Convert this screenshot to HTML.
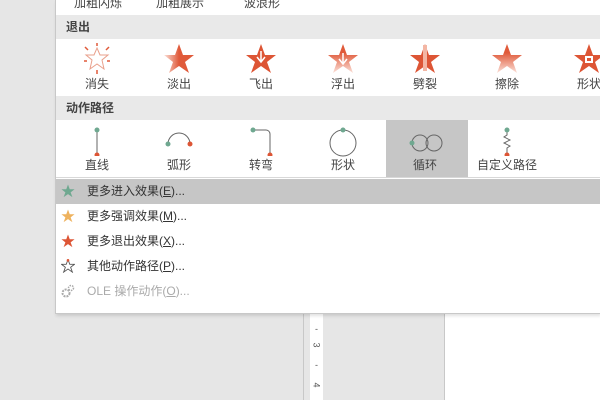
<!DOCTYPE html>
<html><head><meta charset="utf-8"><style>
*{margin:0;padding:0;box-sizing:border-box}
body{width:600px;height:400px;overflow:hidden;background:#e6e6e6;position:relative;font-family:"Liberation Sans","Noto Sans CJK SC",sans-serif;font-size:12px;color:#444}
.menu{position:absolute;left:55px;top:0;width:545px;height:314px;background:#fff;border-left:1px solid #c8c8c8;border-bottom:1px solid #c8c8c8;box-shadow:1px 2px 3px rgba(0,0,0,.12)}
.hdr{position:absolute;left:0;width:545px;height:24px;background:#e9e9e9;font-weight:bold;padding-left:10px;line-height:24px;color:#444}
.cell{position:absolute;width:82px;height:57px;text-align:center}
.cell svg{position:absolute;left:25px;top:4px}
.cell span{position:absolute;left:0;right:0;top:36px;font-size:12px;color:#444}
.item{position:absolute;left:0;width:545px;height:25px;line-height:25px;padding-left:31px;font-size:12px;color:#333}
.item svg{position:absolute;left:5px;top:5px}
u{text-decoration:underline}
</style></head><body>
<div style="position:absolute;left:303px;top:314px;width:1px;height:86px;background:#c8c8c8"></div>
<div style="position:absolute;left:310px;top:314px;width:13px;height:86px;background:#fff;font-size:9px;color:#555;text-align:center">
<div style="position:absolute;top:10px;left:0;right:0">-</div>
<div style="position:absolute;top:26px;left:0;right:0;transform:rotate(90deg)">3</div>
<div style="position:absolute;top:46px;left:0;right:0">-</div>
<div style="position:absolute;top:66px;left:0;right:0;transform:rotate(90deg)">4</div></div>
<div style="position:absolute;left:444px;top:314px;width:156px;height:86px;background:#fff;border-left:1px solid #c8c8c8"></div>
<div class="menu">
<div style="position:absolute;top:-6px;left:18px;font-size:12px;color:#444">加粗闪烁</div>
<div style="position:absolute;top:-6px;left:100px;font-size:12px;color:#444">加粗展示</div>
<div style="position:absolute;top:-6px;left:188px;font-size:12px;color:#444">波浪形</div>
<div class="hdr" style="top:15px">退出</div>
<svg width="0" height="0" style="position:absolute"><defs>
<symbol id="st" viewBox="0 0 32 32"><polygon points="16,1 20,12 31,12 22,19 26,30 16,23 6,30 10,19 1,12 12,12"/></symbol>
<linearGradient id="g1" x1="0" x2="1"><stop offset="0" stop-color="#fbe0d8"/><stop offset=".5" stop-color="#e05a3a"/></linearGradient>
<linearGradient id="g2" x1="0" y1="0" x2="0" y2="1"><stop offset=".3" stop-color="#e05a3a"/><stop offset="1" stop-color="#fbe0d8"/></linearGradient>
</defs></svg>
<div class="cell" style="left:0;top:39px"><svg width="32" height="32" viewBox="0 0 32 32"><polygon points="16,5 19,12 27,12 21,17 23,26 16,21 9,26 11,17 5,12 13,12" fill="#fff" stroke="#e9a08c" stroke-width="1"/><g stroke="#e05a3a" stroke-width="1.5"><path d="M16 0v3M4 4l3 3M28 4l-3 3M16 27v4M3 18h3M29 18h-3"/></g></svg><span>消失</span></div>
<div class="cell" style="left:82px;top:39px"><svg width="32" height="32"><use href="#st" fill="url(#g1)"/></svg><span>淡出</span></div>
<div class="cell" style="left:164px;top:39px"><svg width="32" height="32"><use href="#st" fill="#dd5535"/><path d="M14 0v4M18 0v4M11 2v3M21 2v3M16 8v10M12 14l4 5 4-5" stroke="#fff" stroke-width="1.5" fill="none"/></svg><span>飞出</span></div>
<div class="cell" style="left:246px;top:39px"><svg width="32" height="32"><use href="#st" fill="url(#g2)"/><path d="M16 10v10M12 16l4 5 4-5" stroke="#fff" stroke-width="1.5" fill="none"/></svg><span>浮出</span></div>
<div class="cell" style="left:328px;top:39px"><svg width="32" height="32"><use href="#st" fill="#dd5535"/><rect x="14" y="2" width="4" height="26" fill="#f3b6a4"/></svg><span>劈裂</span></div>
<div class="cell" style="left:410px;top:39px"><svg width="32" height="32"><use href="#st" fill="url(#g2)"/></svg><span>擦除</span></div>
<div class="cell" style="left:492px;top:39px"><svg width="32" height="32"><use href="#st" fill="#dd5535"/><rect x="12" y="13" width="8" height="7" fill="#fff"/><rect x="14" y="15" width="4" height="3" fill="#dd5535"/></svg><span>形状</span></div>
<div class="hdr" style="top:96px">动作路径</div>
<div class="cell" style="left:330px;top:120px;background:#c6c6c6;width:82px"></div>
<div class="cell" style="left:0;top:120px"><svg width="32" height="32"><path d="M16 6v26" stroke="#666"/><circle cx="16" cy="6" r="2.5" fill="#6fa890"/><circle cx="16" cy="31" r="2.5" fill="#dd5535"/></svg><span>直线</span></div>
<div class="cell" style="left:82px;top:120px"><svg width="32" height="32"><path d="M5 20 A11 11 0 0 1 27 20" stroke="#666" fill="none"/><circle cx="5" cy="20" r="2.5" fill="#6fa890"/><circle cx="27" cy="20" r="2.5" fill="#dd5535"/></svg><span>弧形</span></div>
<div class="cell" style="left:164px;top:120px"><svg width="32" height="32"><path d="M8 6h13a4 4 0 0 1 4 4v21" stroke="#666" fill="none"/><circle cx="8" cy="6" r="2.5" fill="#6fa890"/><circle cx="25" cy="31" r="2.5" fill="#dd5535"/></svg><span>转弯</span></div>
<div class="cell" style="left:246px;top:120px"><svg width="32" height="34"><circle cx="16" cy="19" r="13" stroke="#666" fill="none"/><circle cx="16" cy="6" r="2.5" fill="#6fa890"/></svg><span>形状</span></div>
<div class="cell" style="left:328px;top:120px"><svg width="34" height="32"><circle cx="11" cy="19" r="8" stroke="#666" fill="none"/><circle cx="25" cy="19" r="8" stroke="#666" fill="none"/><circle cx="3" cy="19" r="2.5" fill="#6fa890"/></svg><span>循环</span></div>
<div class="cell" style="left:410px;top:120px"><svg width="32" height="32"><path d="M16 6v5l-3 2 6 3-6 3 6 3-3 2v7" stroke="#666" fill="none"/><circle cx="16" cy="6" r="2.5" fill="#6fa890"/><circle cx="16" cy="31" r="2.5" fill="#dd5535"/></svg><span>自定义路径</span></div>
<div style="position:absolute;left:0;top:177px;width:545px;height:1px;background:#d8d8d8"></div>
<div class="item" style="top:179px;background:#c6c6c6"><svg width="14" height="14" viewBox="0 0 32 32"><use href="#st" fill="#6fa890"/></svg>更多进入效果(<u>E</u>)...</div>
<div class="item" style="top:204px"><svg width="14" height="14" viewBox="0 0 32 32"><use href="#st" fill="#eeb25e"/></svg>更多强调效果(<u>M</u>)...</div>
<div class="item" style="top:229px"><svg width="14" height="14" viewBox="0 0 32 32"><use href="#st" fill="#dd5535"/></svg>更多退出效果(<u>X</u>)...</div>
<div class="item" style="top:254px"><svg width="14" height="14" viewBox="0 0 32 32"><use href="#st" fill="#fff" stroke="#555" stroke-width="2"/><circle cx="16" cy="3" r="3" fill="#dd5535"/></svg>其他动作路径(<u>P</u>)...</div>
<div class="item" style="top:279px;color:#aaa"><svg width="14" height="14" viewBox="0 0 14 14"><circle cx="5" cy="9" r="3.5" fill="none" stroke="#aaa" stroke-width="2" stroke-dasharray="2 1"/><circle cx="10" cy="4" r="2.5" fill="none" stroke="#aaa" stroke-width="1.5" stroke-dasharray="1.5 1"/></svg>OLE 操作动作(<u>O</u>)...</div>
</div>
</body></html>
